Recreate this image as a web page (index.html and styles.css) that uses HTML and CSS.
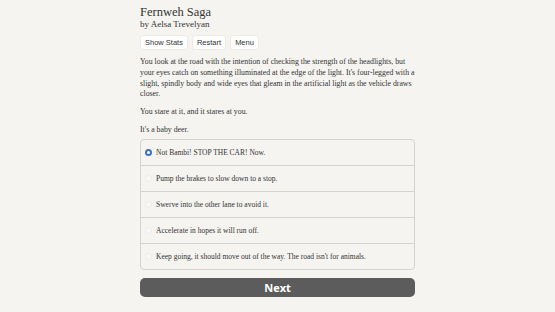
FILE: index.html
```html
<!DOCTYPE html>
<html lang="en">

<head>
    <meta charset="UTF-8">
    <meta name="viewport" content="width=device-width, initial-scale=1.0">
    <title>Fernweh Saga</title>
    <link rel="stylesheet" href="styles.css">
</head>

<body>
    <div id="juego">
        <h1 class="titulo">Fernweh Saga</h1>
        <h2 class="autor">by Aelsa Trevelyan</h2>
        <div class="botones">
            <button class="boton">Show Stats</button>
            <button class="boton">Restart</button>
            <button class="boton">Menu</button>
        </div>
        <div class="texto">
            <p>You look at the road with the intention of checking the strength of the headlights, but your eyes catch on something illuminated at the edge of the light. It's four-legged with a slight, spindly body and wide eyes that gleam in the artificial light as the vehicle draws closer.</p>
            <p>You stare at it, and it stares at you.</p>
            <p>It's a baby deer.</p>
        </div>
        <div class="opciones">
            <label class="opcion"><input type="radio" name="op" checked> Not Bambi! STOP THE CAR! Now.</label>
            <label class="opcion"><input type="radio" name="op"> Pump the brakes to slow down to a stop.</label>
            <label class="opcion"><input type="radio" name="op"> Swerve into the other lane to avoid it.</label>
            <label class="opcion"><input type="radio" name="op"> Accelerate in hopes it will run off.</label>
            <label class="opcion"><input type="radio" name="op"> Keep going, it should move out of the way. The road isn't for animals.</label>
        </div>
        <button class="siguiente">Next</button>
    </div>
</body>

</html>
```

FILE: styles.css
```css
body, html {
    margin: 0;
    padding: 0;
    background-color: #f5f4f0;
    font-family: "Liberation Serif", serif;
    color: #333;
}

#juego {
    width: 275px;
    margin: 0 auto;
    padding-top: 5px;
}

.titulo {
    margin: 0;
    font-size: 12.5px;
    font-weight: normal;
    line-height: 14px;
    color: #333;
}

.autor {
    margin: 0;
    font-size: 9px;
    font-weight: normal;
    line-height: 11px;
}

.botones {
    display: flex;
    gap: 4px;
    margin-top: 5px;
}

.boton {
    font-family: "Liberation Sans", Arial, sans-serif;
    font-size: 7.5px;
    color: #333;
    background-color: white;
    border: 1px solid #ecebe7;
    border-radius: 3px;
    padding: 2px 4px;
}

.texto {
    margin-top: 7px;
    font-size: 7.8px;
    line-height: 10.8px;
}

.texto p {
    margin: 0 0 7px 0;
}

.texto p:last-child {
    margin-bottom: 0;
}

.opciones {
    border: 1px solid #d3d3d0;
    border-radius: 4px;
    margin-top: 3px;
}

.opcion {
    display: flex;
    align-items: center;
    height: 25px;
    padding-left: 4px;
    font-size: 7.5px;
    border-top: 1px solid #d3d3d0;
}

.opcion:first-child {
    border-top: none;
}

.opcion input {
    appearance: none;
    width: 7px;
    height: 7px;
    margin: 0 4px 0 0;
    border: 1px solid #ecebe8;
    border-radius: 50%;
    background-color: #f8f8f6;
}

.opcion input:checked {
    border: 2px solid #3d72c4;
    background-color: white;
}

.siguiente {
    display: block;
    width: 100%;
    height: 19px;
    margin-top: 8px;
    background-color: #5c5c5c;
    color: white;
    border: none;
    border-radius: 5px;
    font-family: "Open Sans", sans-serif;
    font-weight: bold;
    font-size: 11px;
}
```
